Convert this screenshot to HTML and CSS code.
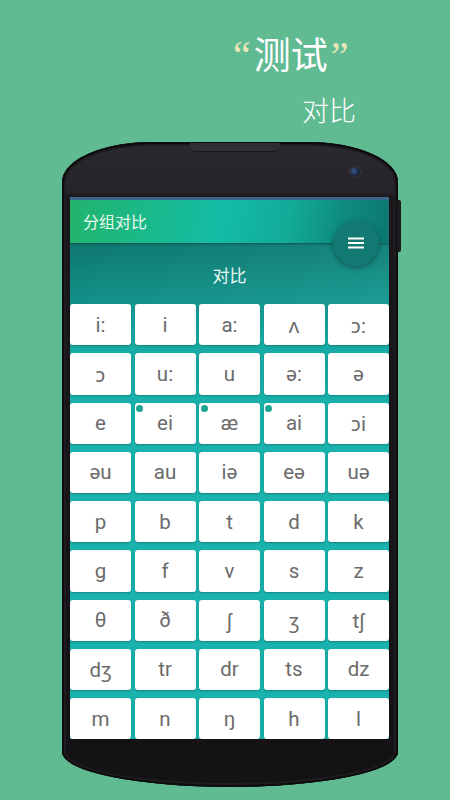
FILE: index.html
```html
<!DOCTYPE html>
<html lang="zh">
<head>
<meta charset="utf-8">
<title>测试 对比</title>
<link rel="stylesheet" href="styles.css">
</head>
<body>
<div class="hero">
  <div class="title"><span class="q">“</span>测试<span class="q">”</span></div>
  <div class="sub">对比</div>
</div>
<div class="phone">
  <div class="speaker"></div>
  <div class="camera"></div>
  <div class="side-btn"></div>
  <div class="screen">
    <div class="status"></div>
    <div class="appbar">分组对比</div>
    <div class="fab">
      <svg width="16" height="12" viewBox="0 0 16 12"><rect x="0" y="0.5" width="16" height="2" fill="#fff"/><rect x="0" y="5" width="16" height="2" fill="#fff"/><rect x="0" y="9.5" width="16" height="2" fill="#fff"/></svg>
    </div>
    <div class="heading">对比</div>
    <div class="grid">
      <div class="cell">i:</div><div class="cell">i</div><div class="cell">a:</div><div class="cell">ʌ</div><div class="cell">ɔ:</div>
      <div class="cell">ɔ</div><div class="cell">u:</div><div class="cell">u</div><div class="cell">ə:</div><div class="cell">ə</div>
      <div class="cell">e</div><div class="cell dot">ei</div><div class="cell dot">æ</div><div class="cell dot">ai</div><div class="cell">ɔi</div>
      <div class="cell">əu</div><div class="cell">au</div><div class="cell">iə</div><div class="cell">eə</div><div class="cell">uə</div>
      <div class="cell">p</div><div class="cell">b</div><div class="cell">t</div><div class="cell">d</div><div class="cell">k</div>
      <div class="cell">g</div><div class="cell">f</div><div class="cell">v</div><div class="cell">s</div><div class="cell">z</div>
      <div class="cell">θ</div><div class="cell">ð</div><div class="cell">ʃ</div><div class="cell">ʒ</div><div class="cell">tʃ</div>
      <div class="cell">dʒ</div><div class="cell">tr</div><div class="cell">dr</div><div class="cell">ts</div><div class="cell">dz</div>
      <div class="cell">m</div><div class="cell">n</div><div class="cell">ŋ</div><div class="cell">h</div><div class="cell">l</div>
    </div>
  </div>
</div>
</body>
</html>
```
FILE: styles.css
```css
html, body {
  margin: 0;
  padding: 0;
}
body {
  background: #60bb93;
  width: 450px;
  height: 800px;
  overflow: hidden;
  font-family: "Noto Sans CJK SC", "Noto Sans", sans-serif;
}
.hero {
  height: 142px;
  box-sizing: border-box;
  padding-top: 30px;
  color: #ffffff;
}
.title {
  margin-left: 230px;
  font-size: 37px;
  line-height: 46px;
  white-space: nowrap;
}
.q {
  font-family: "Liberation Serif", serif;
  color: #ebe6b9;
  font-size: 40px;
  margin: 0 3px;
}
.sub {
  margin-left: 302px;
  margin-top: 14px;
  font-size: 27px;
  line-height: 34px;
  font-weight: 300;
}
.phone {
  position: relative;
  margin-left: 62px;
  width: 336px;
  height: 645px;
  box-sizing: border-box;
  padding: 55px 9px 0 8px;
  background: linear-gradient(180deg, #2b292d 0, #262428 50px, #1a181b 56px, #141214 600px);
  border-radius: 90px 90px 168px 168px / 40px 40px 35px 35px;
  box-shadow: inset 0 0 0 2px #0c0b0d, inset 0 0 0 4px #1f1d21;
}
.speaker {
  position: absolute;
  top: 1px;
  left: 128px;
  width: 90px;
  height: 8px;
  background: #302e33;
  border-radius: 0 0 6px 6px;
  border-bottom: 1px solid #1a181c;
}
.camera {
  position: absolute;
  top: 25px;
  left: 288px;
  width: 10px;
  height: 10px;
  border-radius: 50%;
  background: radial-gradient(circle at 40% 40%, #3c5a8c 0, #1c2540 55%, #0c0e18 100%);
  box-shadow: 0 0 0 1px #3a383c;
}
.side-btn {
  position: absolute;
  top: 58px;
  right: -3px;
  width: 4px;
  height: 52px;
  background: #1c1a1d;
  border-radius: 0 2px 2px 0;
}
.screen {
  position: relative;
  width: 319px;
  height: 542px;
  overflow: hidden;
  background: linear-gradient(180deg, #0f7f77 0, #0f7f77 46px, #13958c 96px, #18aaa4 140px, #1ab2ad 220px, #1ab2ad 100%);
}
.status {
  height: 3px;
  background: #3d6890;
}
.appbar {
  height: 43px;
  box-sizing: border-box;
  padding-left: 13px;
  line-height: 42px;
  font-size: 16px;
  color: #e9f7ee;
  background: linear-gradient(100deg, #22b46c 0%, #19b98a 25%, #13bca6 48%, #12ab98 68%, #0e8a80 85%, #0c7770 100%);
  box-shadow: 0 1px 2px rgba(0, 0, 0, 0.35);
  position: relative;
}
.fab {
  position: absolute;
  left: 263px;
  top: 23px;
  width: 46px;
  height: 46px;
  border-radius: 50%;
  background: #127a73;
  box-shadow: 0 2px 5px rgba(0, 0, 0, 0.35);
  display: flex;
  align-items: center;
  justify-content: center;
}
.heading {
  height: 61px;
  box-sizing: border-box;
  padding-top: 20px;
  text-align: center;
  font-size: 17px;
  line-height: 24px;
  color: #eaf7f2;
  background: linear-gradient(90deg, rgba(0, 0, 0, 0.06), rgba(255, 255, 255, 0.03));
}
.grid {
  display: grid;
  grid-template-columns: repeat(5, 1fr);
  grid-auto-rows: 41.25px;
  column-gap: 3.5px;
  row-gap: 8px;
}
.cell {
  position: relative;
  background: #ffffff;
  border-radius: 3px;
  box-shadow: 0 1px 2px rgba(0, 0, 0, 0.25);
  display: flex;
  align-items: center;
  justify-content: center;
  font-family: Roboto, "Noto Sans", sans-serif;
  font-size: 20.5px;
  color: #6b6b6b;
}
.cell.dot::before {
  content: "";
  position: absolute;
  left: 1.5px;
  top: 2px;
  width: 7px;
  height: 7px;
  border-radius: 50%;
  background: #1ba596;
}
```
